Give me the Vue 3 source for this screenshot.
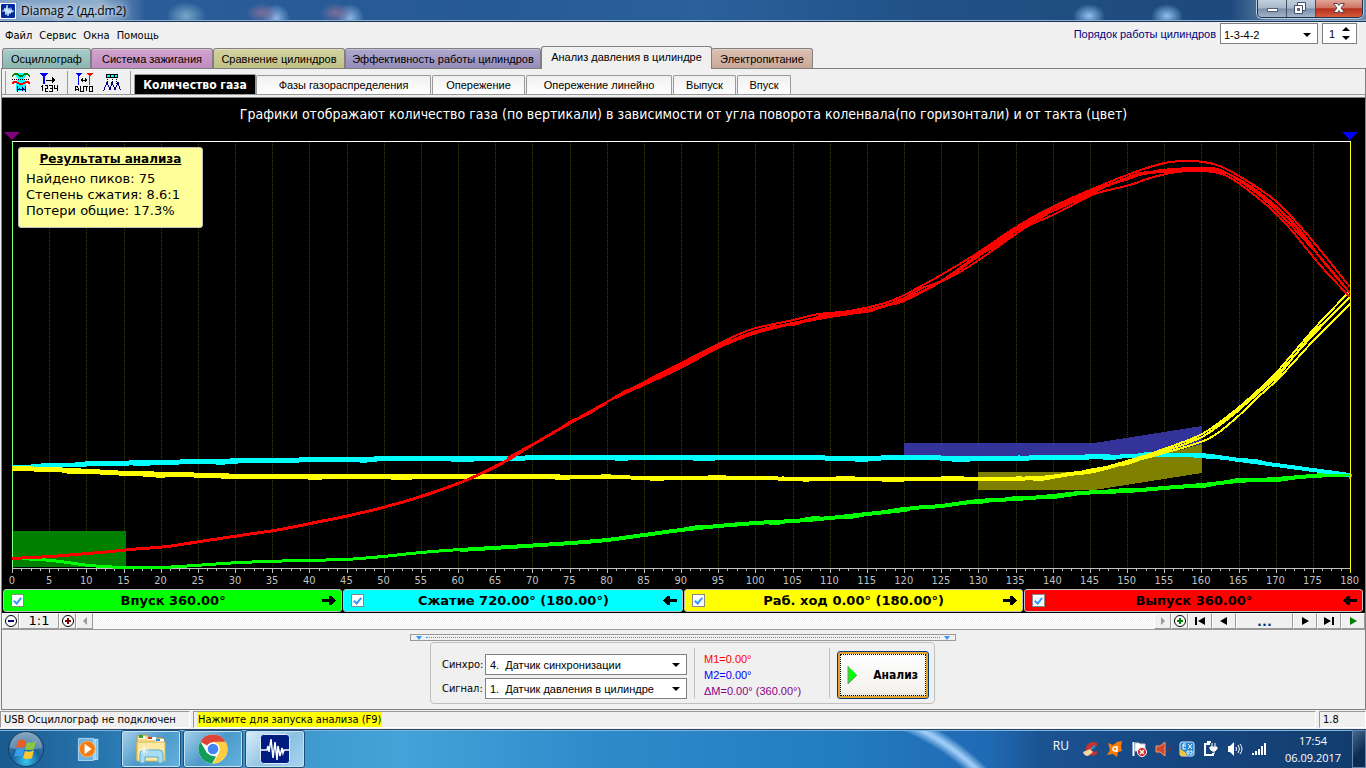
<script setup>
import { ref } from 'vue'

const menu = ['Файл', 'Сервис', 'Окна', 'Помощь']
const tabs = [
  { name: 'Осциллограф', tone: 'teal', w: 89 },
  { name: 'Система зажигания', tone: 'pink', w: 122 },
  { name: 'Сравнение цилиндров', tone: 'olive', w: 132 },
  { name: 'Эффективность работы цилиндров', tone: 'violet', w: 196 },
  { name: 'Анализ давления в цилиндре', tone: 'plain', w: 171 },
  { name: 'Электропитание', tone: 'brown', w: 102 },
]
const views = [
  { name: 'Количество газа', w: 122 },
  { name: 'Фазы газораспределения', w: 175 },
  { name: 'Опережение', w: 93 },
  { name: 'Опережение линейно', w: 146 },
  { name: 'Выпуск', w: 63 },
  { name: 'Впуск', w: 54 },
]
const activeTab = ref(4)
const activeView = ref(0)

const strokes = ref([
  { id: 'intake', label: 'Впуск 360.00°', color: 'lime', dir: 'right', on: true },
  { id: 'compression', label: 'Сжатие 720.00° (180.00°)', color: 'cyan', dir: 'left', on: true },
  { id: 'power', label: 'Раб. ход 0.00° (180.00°)', color: 'yellow', dir: 'right', on: true },
  { id: 'exhaust', label: 'Выпуск 360.00°', color: 'red', dir: 'left', on: true },
])

const degrees = Array.from({ length: 37 }, (_, i) => i * 5)
const minorTicks = Array.from({ length: 145 }, (_, i) => i)
const gridX = (i) => Math.round(12 + (i * 1338) / 36) + 0.5
const minorX = (i) => Math.round(12 + (i * 1338) / 144) + 0.5

const smooth = (pts, dy = 0) => {
  let d = `M${pts[0][0]} ${pts[0][1] + dy}`
  for (let i = 0; i < pts.length - 1; i++) {
    const a = pts[i - 1] || pts[i]
    const b = pts[i]
    const c = pts[i + 1]
    const e = pts[i + 2] || c
    d += `C${b[0] + (c[0] - a[0]) / 6} ${b[1] + dy + (c[1] - a[1]) / 6} ${c[0] - (e[0] - b[0]) / 6} ${c[1] + dy - (e[1] - b[1]) / 6} ${c[0]} ${c[1] + dy}`
  }
  return d
}

// One more recorded cycle that drifts a pixel or two around the mean curve.
const drift = (pts, seed) => {
  const shifts = [0, 2, 1, -1, -2, 0, 1, -1, 2, 0, -2]
  const out = []
  pts.forEach((p, i) => {
    const next = pts[i + 1]
    if (!next) {
      out.push(p)
      return
    }
    const n = Math.max(1, Math.round((next[0] - p[0]) / 22))
    for (let k = 0; k < n; k++) {
      const t = k / n
      const s = shifts[(out.length + seed) % shifts.length]
      out.push([p[0] + (next[0] - p[0]) * t, p[1] + (next[1] - p[1]) * t + s])
    }
  })
  return out
}

const redStart = [[12, 558], [50, 556], [100, 552], [130, 549], [167, 546], [200, 541], [240, 535], [280, 529], [320, 521], [345, 516], [383, 507], [421, 496], [458, 483], [477, 475], [507, 460], [533, 444], [571, 422], [607, 402]]
const red = [
  [...redStart, [644, 382], [681, 363], [718, 344], [737, 335], [756, 328], [793, 320], [819, 314], [850, 311], [885, 303], [904, 295], [941, 275], [979, 252], [1016, 227], [1050, 208], [1090, 190], [1127, 175], [1150, 167], [1170, 162], [1193, 161], [1217, 165], [1239, 176], [1258, 188], [1277, 202], [1300, 226], [1325, 256], [1350, 287]],
  [...redStart, [644, 384], [681, 366], [718, 347], [756, 332], [793, 323], [830, 317], [867, 311], [904, 300], [941, 281], [979, 254], [1016, 229], [1050, 210], [1090, 192], [1128, 179], [1150, 172], [1173, 169], [1217, 169], [1250, 188], [1275, 209], [1300, 235], [1327, 265], [1350, 293]],
  [...redStart, [644, 385], [681, 368], [718, 348], [756, 333], [793, 324], [830, 317], [867, 311], [885, 306], [904, 301], [941, 282], [960, 272], [979, 260], [1016, 234], [1030, 225], [1053, 215], [1080, 201], [1097, 193], [1130, 185], [1150, 178], [1177, 172], [1202, 171], [1227, 176], [1263, 202], [1287, 225], [1320, 265], [1350, 297]],
  [...redStart, [644, 384], [681, 365], [718, 346], [756, 331], [793, 323], [830, 315], [867, 310], [904, 299], [941, 281], [979, 256], [1016, 231], [1053, 211], [1080, 197], [1105, 186], [1140, 175], [1160, 172], [1190, 170], [1220, 171], [1250, 186], [1280, 210], [1300, 232], [1322, 260], [1350, 293]],
]
const cyan = [[12, 467], [50, 466], [75, 465], [100, 464], [160, 463], [200, 462], [260, 461], [340, 460], [410, 459], [460, 459], [600, 458], [700, 458], [790, 458], [860, 459], [904, 458], [980, 459], [1060, 458], [1110, 457], [1150, 455], [1200, 455], [1239, 460], [1276, 465], [1313, 470], [1350, 475]]
const yellowBase = [[12, 469], [50, 470], [90, 472], [130, 474], [180, 475], [250, 477], [440, 477], [560, 477], [700, 478], [867, 479], [979, 479], [1040, 478], [1070, 474], [1094, 471], [1127, 462]]
const yellow = [
  [...yellowBase, [1164, 450], [1202, 435], [1233, 413], [1255, 394], [1277, 373], [1313, 331], [1350, 292]],
  [...yellowBase, [1164, 451], [1202, 437], [1233, 414], [1255, 396], [1277, 375], [1313, 335], [1350, 297]],
  [...yellowBase, [1164, 452], [1208, 438], [1235, 418], [1257, 397], [1280, 376], [1315, 338], [1350, 303]],
]
const green = [[12, 559], [40, 560], [60, 562], [90, 566], [125, 568], [160, 568], [195, 566], [240, 563], [300, 561], [345, 560], [383, 557], [421, 553], [460, 550], [526, 546], [571, 543], [607, 540], [644, 535], [681, 530], [718, 526], [756, 523], [793, 521], [830, 518], [867, 514], [904, 510], [913, 508], [941, 506], [979, 501], [1016, 499], [1053, 496], [1080, 493], [1127, 491], [1164, 488], [1202, 485], [1239, 481], [1276, 479], [1313, 476], [1347, 475], [1350, 477]]
</script>

<template>
  <div class="screen">
    <header class="titlebar">
      <svg class="appicon" viewBox="0 0 16 16"><rect width="16" height="16" fill="#fff" /><rect x="1" y="1" width="14" height="14" rx="1" fill="#002a9c" /><path d="M2 8h2l1-3 1 7 1-10 1 11 1-8 1 6 1-5 1 3 1-1h1" fill="none" stroke="#cfe6ff" stroke-width="1.2" /></svg>
      <span class="wintitle">Diamag 2 (дд.dm2)</span>
      <div class="winbtns">
        <button class="wb" aria-label="Свернуть"><svg width="28" height="17" viewBox="0 0 28 17"><rect x="9.500" y="8.500" width="10" height="3" fill="#fff" stroke="#556078" /></svg></button>
        <button class="wb" aria-label="Развернуть"><svg width="28" height="17" viewBox="0 0 28 17"><path d="M10.500 2.500h8v8h-8z" fill="#fff" stroke="#46506a" /><path d="M7.500 5.500h8v8h-8z" fill="#fff" stroke="#46506a" /><path d="M10.500 8.500h2v2h-2z" fill="#7f9abb" stroke="#46506a" /></svg></button>
        <button class="wb close" aria-label="Закрыть"><svg width="46" height="17" viewBox="0 0 46 17"><path d="M17.500 3.500h4l1.500 2 1.500-2h4l-3.500 4.500 3.500 4.500h-4l-1.500-2-1.500 2h-4l3.500-4.500z" fill="#fff" stroke="#5b4048" /></svg></button>
      </div>
    </header>

    <div class="menurow">
      <nav class="menu"><button v-for="m in menu" :key="m">{{ m }}</button></nav>
      <div class="order">
        <label for="order">Порядок работы цилиндров</label>
        <span class="combo ordercombo"><select id="order"><option>1-3-4-2</option></select><svg class="caret" viewBox="0 0 8 4"><path d="M0 0h8L4 4z" /></svg></span>
        <span class="spin">
          <input value="1" aria-label="Номер цилиндра">
          <span class="arrows">
            <button aria-label="Больше"><svg viewBox="0 0 8 4"><path d="M0 4h8L4 0z" /></svg></button>
            <button aria-label="Меньше"><svg viewBox="0 0 8 4"><path d="M0 0h8L4 4z" /></svg></button>
          </span>
        </span>
      </div>
    </div>

    <nav class="tabs">
      <button v-for="(t, i) in tabs" :key="t.name" class="tab" :class="[t.tone, { active: i === activeTab }]" :style="{ width: t.w + 'px' }" @click="activeTab = i">{{ t.name }}</button>
    </nav>

    <main class="frame">
      <div class="toolbar">
        <button class="tool" aria-label="Область анализа"><svg viewBox="0 0 20 20" shape-rendering="crispEdges"><path d="M5 1h10v3l-2 3 2 4v8H5v-8l2-4-2-3z" fill="cyan" /><path d="M1 4h1M18 4h1M2 3l2-1h2l3 2h2l3-2h2l2 1" fill="none" stroke="green" stroke-width="1.500" /><path d="M1 7h18" stroke="#000" stroke-dasharray="1 1" /><path d="M1 12l2-2h2l4 2h2l4-2h2l2 2" fill="none" stroke="red" stroke-width="1.500" /><path d="M6 17h8M6 14v6M14 14v6" stroke="navy" /><path d="M7 17l2-2v4zM13 17l-2-2v4z" fill="navy" /></svg></button>
        <button class="tool" aria-label="Нумерация цилиндров"><svg viewBox="0 0 20 20" shape-rendering="crispEdges"><path d="M1 1h8L5 6z" fill="blue" /><path d="M5 5v7" stroke="blue" stroke-width="1.500" /><path d="M7 8h7" stroke="#000" /><path d="M13 5l4 3-4 3z" /><path d="M3 13v6M2 14h1M6 13h2v3H6v3h3M10 13h3v6h-3M11 16h2M15 13v3h3M18 13v6" fill="none" stroke="#000" /></svg></button>
        <span class="sep" />
        <button class="tool" aria-label="Автоматическая установка маркеров"><svg viewBox="0 0 20 20" shape-rendering="crispEdges"><path d="M1 1h7L5 5z" fill="blue" /><path d="M4.500 3v10" stroke="blue" stroke-width="1.500" /><path d="M12 1h7l-3 4z" fill="red" /><path d="M15.500 3v10" stroke="red" stroke-width="1.500" /><path d="M7 8h6" stroke="#000" /><path d="M6 8l3-2v4zM14 8l-3-2v4z" /><path d="M1 19v-3l1-2h1l1 2v3M1 17h3M6 14v5h3v-5M10 14h4M12 14v5M15 14h3v5h-3z" fill="none" stroke="#000" /></svg></button>
        <button class="tool" aria-label="Поиск пиков"><svg viewBox="0 0 20 20" shape-rendering="crispEdges"><path d="M4.500 2.500h11v3h-11z" fill="cyan" stroke="#000" /><path d="M8 2v4M12 2v4" stroke="#000" /><path d="M5 7v6M10 7v6M14 7v6" stroke="#000" stroke-dasharray="1 1" /><path d="M1 18h1l3-8 3 8 2-8 3 8 3-8 2 7 1 1" fill="none" stroke="navy" /></svg></button>
        <span class="sep" />
        <nav class="views">
          <button v-for="(v, i) in views" :key="v.name" :class="{ active: i === activeView }" :style="{ width: v.w + 'px' }" @click="activeView = i">{{ v.name }}</button>
        </nav>
      </div>

      <section class="chart">
        <h1>Графики отображают количество газа (по вертикали) в зависимости от угла поворота коленвала(по горизонтали) и от такта (цвет)</h1>
        <div class="markers">
          <svg width="16" height="8" viewBox="0 0 16 8"><path d="M0 0h16L8 8z" fill="purple" /></svg>
          <svg width="16" height="8" viewBox="0 0 16 8"><path d="M0 0h16L8 8z" fill="blue" /></svg>
        </div>
        <div class="plot">
          <svg class="curves" viewBox="12 141 1339 432" preserveAspectRatio="none" shape-rendering="crispEdges">
            <g stroke="#404000" stroke-dasharray="1 1"><line v-for="(d, i) in degrees" :key="d" :x1="gridX(i)" :x2="gridX(i)" y1="142" y2="568" /></g>
            <rect x="13" y="531" width="113" height="36" fill="green" />
            <path d="M904 443H1094L1202 426V444L1140 458H904z" fill="#333399" />
            <path d="M978 472H1094L1202 444V473L1094 490H978z" fill="#808000" />
            <path d="M12.500 142v426" stroke="#80ff80" />
            <path d="M12 141.500h1339" stroke="#fff" />
            <path d="M12 568.500h1339" stroke="#c0c0c0" />
            <g stroke="#c0c0c0"><line v-for="i in minorTicks" :key="i" :x1="minorX(i)" :x2="minorX(i)" y1="569" :y2="i % 4 ? 571 : 573" /></g>
            <g fill="none" stroke-width="2" stroke-linejoin="round">
              <g v-if="strokes[0].on" stroke="lime"><path :d="smooth(green)" /><path :d="smooth(green, -1)" /><path :d="smooth(green.slice(12), 1)" /><path :d="smooth(drift(green.slice(17), 3))" /></g>
              <g v-if="strokes[1].on" stroke="cyan"><path v-for="o in [-1, 0, 1]" :key="o" :d="smooth(cyan, o)" /><path :d="smooth(cyan.slice(2, 18), -2)" /><path :d="smooth(drift(cyan, 2))" /></g>
              <g v-if="strokes[0].on" stroke="lime"><path :d="smooth(green.slice(34))" /></g>
              <g v-if="strokes[2].on" stroke="yellow"><path v-for="(p, i) in yellow" :key="i" :d="smooth(p, i - 1)" /><path :d="smooth(yellowBase.slice(0, 8), -2)" /><path :d="smooth(drift(yellow[1], 5))" /></g>
              <g v-if="strokes[3].on" stroke="red"><path v-for="(p, i) in red" :key="i" :d="smooth(p)" /><path :d="smooth(redStart, 1)" /><path :d="smooth(drift(red[3].slice(14), 4))" /></g>
            </g>
            <path d="M1350.500 142v431" stroke="yellow" />
          </svg>
          <aside class="results">
            <h2>Результаты анализа</h2>
            <p>Найдено пиков: 75</p>
            <p>Степень сжатия: 8.6:1</p>
            <p>Потери общие: 17.3%</p>
          </aside>
        </div>
        <div class="axis"><span v-for="d in degrees" :key="d">{{ d }}</span></div>
        <div class="legend">
          <label v-for="s in strokes" :key="s.id" class="stroke" :class="s.color">
            <input v-model="s.on" type="checkbox">
            <span>{{ s.label }}</span>
            <svg width="14" height="9" viewBox="0 0 14 9" shape-rendering="crispEdges"><path v-if="s.dir === 'right'" d="M0 3h7V0h2l5 4.500L9 9H7V6H0z" /><path v-else d="M14 3H7V0H5L0 4.500 5 9h2V6h7z" /></svg>
          </label>
        </div>
      </section>

      <div class="scroller">
        <button class="zoombtn" aria-label="Уменьшить"><svg viewBox="0 0 14 14"><circle cx="7" cy="7" r="5.500" fill="#fff" stroke="#000" /><path d="M4 7h6" stroke="navy" stroke-width="2" /></svg></button>
        <button class="ratio">1:1</button>
        <button class="zoombtn" aria-label="Увеличить"><svg viewBox="0 0 14 14"><circle cx="7" cy="7" r="5.500" fill="#fff" stroke="#000" /><path d="M4 7h6M7 4v6" stroke="maroon" stroke-width="2" /></svg></button>
        <button class="zoombtn" aria-label="Влево"><svg viewBox="0 0 14 14"><path d="M9 3v8L5 7z" fill="#999" /></svg></button>
        <div class="track" />
        <button class="zoombtn" aria-label="Вправо"><svg viewBox="0 0 14 14"><path d="M5 3v8l4-4z" fill="#999" /></svg></button>
        <button class="zoombtn" aria-label="Добавить"><svg viewBox="0 0 14 14"><circle cx="7" cy="7" r="5.500" fill="#fff" stroke="#000" /><path d="M4 7h6M7 4v6" stroke="green" stroke-width="2" /></svg></button>
        <button class="step" aria-label="В начало"><svg viewBox="0 0 14 14"><path d="M3 3v8" stroke="#000" stroke-width="2" /><path d="M12 3v8L5 7z" /></svg></button>
        <button class="step" aria-label="Назад"><svg viewBox="0 0 14 14"><path d="M10 3v8L3 7z" /></svg></button>
        <button class="dots">...</button>
        <button class="step" aria-label="Вперёд"><svg viewBox="0 0 14 14"><path d="M4 3v8l7-4z" /></svg></button>
        <button class="step" aria-label="В конец"><svg viewBox="0 0 14 14"><path d="M2 3v8l7-4z" /><path d="M11 3v8" stroke="#000" stroke-width="2" /></svg></button>
        <button class="step" aria-label="Пуск"><svg viewBox="0 0 14 14"><path d="M4 3v8l7-4z" fill="green" /></svg></button>
      </div>

      <section class="controls">
        <div class="splitter"><svg viewBox="0 0 6 4"><path d="M0 0h6L3 4z" /></svg><i /><svg viewBox="0 0 6 4"><path d="M0 0h6L3 4z" /></svg></div>
        <div class="group">
          <div class="fields">
            <label for="sync">Синхро:</label>
            <span class="combo"><select id="sync"><option>4.&nbsp; Датчик синхронизации</option></select><svg class="caret" viewBox="0 0 8 4"><path d="M0 0h8L4 4z" /></svg></span>
            <label for="signal">Сигнал:</label>
            <span class="combo"><select id="signal"><option>1.&nbsp; Датчик давления в цилиндре</option></select><svg class="caret" viewBox="0 0 8 4"><path d="M0 0h8L4 4z" /></svg></span>
          </div>
          <div class="marks"><p class="m1">M1=0.00°</p><p class="m2">M2=0.00°</p><p class="md">ΔM=0.00° (360.00°)</p></div>
          <button class="analyze"><svg width="11" height="20" viewBox="0 0 11 20"><path d="M1 1l9 9-9 9z" fill="lime" /><path d="M1 1v18l9-9" fill="none" stroke="#888" /></svg><span>Анализ</span></button>
        </div>
      </section>
    </main>

    <footer class="status">
      <span class="usb">USB Осциллограф не подключен</span>
      <span class="hint"><mark>Нажмите для запуска анализа (F9)</mark></span>
      <span class="version">1.8</span>
    </footer>

    <div class="taskbar">
      <button class="start" aria-label="Пуск"><svg viewBox="0 0 38 38"><defs><radialGradient id="orb" cx=".5" cy=".85" r=".8"><stop offset="0" stop-color="#38c8f0" /><stop offset=".5" stop-color="#17619c" /><stop offset="1" stop-color="#5d84a4" /></radialGradient></defs><circle cx="19" cy="19" r="17.500" fill="url(#orb)" stroke="#123c61" /><path d="M3 18a16 16 0 0 1 32 0q-16 4-32 0z" fill="#fff" opacity=".25" /><path d="M11 11q4-3 8 0l-2 7q-4-2-8 0z" fill="#ef5b25" /><path d="M20 12q5 2 9-1l-2 8q-4 2-9 0z" fill="#8cc540" /><path d="M9 20q4-3 8 0l-2 7q-4-2-8 0z" fill="#38a0e8" /><path d="M18 21q5 2 9-1l-2 8q-4 2-9 0z" fill="#fdc72f" /></svg></button>
      <button class="task bare" aria-label="Проигрыватель"><svg viewBox="0 0 34 34"><path d="M20 6h7v23h-7z" fill="#7fc0ea" stroke="#c3e5fa" /><path d="M24 6v23" stroke="#d7effc" /><path d="M5 5h17v25H5z" fill="#6db4e3" stroke="#b6dcf4" /><circle cx="15" cy="17" r="9" fill="#f47b12" stroke="#ffb35e" /><path d="M12 11l8 6-8 6z" fill="#fff" /></svg></button>
      <button class="task" aria-label="Проводник"><svg viewBox="0 0 34 34"><path d="M3 9V5l2-2h8l2 3h14l1 3v18H2z" fill="#f4dc82" stroke="#b99b45" /><path d="M5 4h6v3H5z" fill="#fff" /><path d="M5 3h4v3H5z" fill="#39a13c" /><path d="M14 5h8v3h-8z" fill="#fff" /><path d="M14 5h4v2h-4z" fill="#d43c21" /><path d="M22 7h8v3h-8z" fill="#fff" /><path d="M22 7h4v2h-4z" fill="#2790dd" /><path d="M3 10h28v19H3z" fill="#fbe9a2" stroke="#d3b75e" /><path d="M6 31v-9q0-4 4-4h15q4 0 4 4v9h-5v-6H11v6z" fill="#a7dcf2" stroke="#5aa9cf" /><path d="M10 13v10M5 18h10M7 15l6 6M13 15l-6 6" stroke="#fff" opacity=".85" /></svg></button>
      <button class="task" aria-label="Браузер"><svg viewBox="0 0 34 34"><circle cx="17" cy="17" r="14.500" fill="#fff" /><path d="M17 17L4.400 9.800A14.500 14.500 0 0 1 29.600 9.800z" fill="#db4437" /><path d="M17 17V9.800h12.600A14.500 14.500 0 0 1 17 31.500l6-11z" fill="#ffcd40" /><path d="M4.400 9.800L11 21l6 3 3 .5-3.800 7A14.500 14.500 0 0 1 4.400 9.800z" fill="#0f9d58" /><circle cx="17" cy="17" r="6.800" fill="#fff" /><circle cx="17" cy="17" r="5.300" fill="#4285f4" /></svg></button>
      <button class="task current" aria-label="Diamag 2"><svg viewBox="0 0 34 34"><rect x="2.500" y="2.500" width="29" height="29" rx="3" fill="#001c80" stroke="#dfeaff" /><path d="M3 18h6l1-4 1 6 2-13 2 19 2-16 2 18 1-14 2 10 2-8 1 5 1-3h5" fill="none" stroke="#fff" stroke-width="1.500" /></svg></button>
      <div class="tray">
        <span class="lang">RU</span>
        <svg viewBox="0 0 16 16"><path d="M14 5V2Q8-1 4 4q-3 5 1 9 4 3 9 0v-3q-4 2-6-1-1-5 6-4z" fill="#c8322d" /><path d="M0 11l7-3 3 3-5 4q-4 0-5-4z" fill="#f3d5a2" /><path d="M8 8l4-3" stroke="#4a91c9" stroke-width="2" /></svg>
        <svg viewBox="0 0 16 16"><path d="M1 2l5 2 4-3 5-1-1 6 1 4-4 1-1 5-4-3-6 1 3-5z" fill="#ff7800" /><path d="M10 5v6M10 8a2 2 0 1 0-4 0 2 2 0 0 0 4 0" fill="none" stroke="#fff" stroke-width="1.500" /></svg>
        <svg viewBox="0 0 16 16"><path d="M2.500 1v14" stroke="#fff" stroke-width="2" /><path d="M4 2h4l1 1h5v7H4z" fill="#fff" stroke="#ccc" /><circle cx="11" cy="11" r="4.500" fill="#d62020" stroke="#fff" /><path d="M9 9l4 4M13 9l-4 4" stroke="#fff" stroke-width="1.500" /></svg>
        <svg viewBox="0 0 16 16"><path d="M1 5h4l5-4v14l-5-4H1z" fill="#ce492c" stroke="#ef9c76" /><path d="M12 5q2 3 0 6M14 3q3 5 0 10" fill="none" stroke="#7b2f32" /></svg>
        <svg viewBox="0 0 16 16"><rect x="1" y="1" width="14" height="14" rx="2" fill="#2385d1" stroke="#d5ecfb" /><path d="M4 3v5h3M4 5h3M4 3h3M9 3l4 5M13 3L9 8M8 10h2v3H8zM11 10h2v3h-2" fill="none" stroke="#fff" /><path d="M1 8l5 3 2 4H3q-2 0-2-2z" fill="#f1c63c" /></svg>
        <svg viewBox="0 0 16 16"><path d="M7 3H2v11h8v-2M4 1h4" fill="none" stroke="#fff" stroke-width="2" /><path d="M7 6h7v2l-2 2H9L7 8zM9 2v4M12 2v4M11 10v3" fill="#fff" stroke="#fff" /></svg>
        <svg viewBox="0 0 16 16"><path d="M1 5h2l4-4v14l-4-4H1z" fill="#fff" /><path d="M9 6q1 2 0 4M11 4q3 4 0 8M13 3q4 5 0 10" fill="none" stroke="#fff" /></svg>
        <svg viewBox="0 0 16 16"><path d="M1 14v-2h2v2zM4 14v-4h2v4zM7 14V8h2v6zM10 14V5h2v9zM13 14V2h2v12z" fill="#fff" /></svg>
        <div class="clock"><span>17:54</span><span>06.09.2017</span></div>
        <button class="peek" aria-label="Рабочий стол" />
      </div>
    </div>
  </div>
</template>

<style>
html, body { margin: 0; background: #f0f0f0; }
#app { display: block; }
</style>

<style scoped>
* { box-sizing: border-box; }
.screen { min-height: 100vh; display: flex; flex-direction: column; background: #f0f0f0; color: #000; font: 11px/14px "Liberation Sans", Arial, sans-serif; }
button, input, select { font: inherit; color: inherit; margin: 0; padding: 0; border: 0; background: none; border-radius: 0; }
h1, h2, p { margin: 0; font-weight: normal; }
svg { display: block; flex: none; }

.titlebar { height: 22px; display: flex; align-items: flex-start; gap: 5px; border-bottom: 1px solid #1b3354; box-shadow: inset 0 -1px #8fb0d2; background: radial-gradient(ellipse 20px 14px at 186px 16px, #78a9c9, transparent), radial-gradient(ellipse 16px 10px at 262px 13px, #7a6f9c, transparent), radial-gradient(ellipse 14px 14px at 276px 18px, #8db6e6, transparent), radial-gradient(ellipse 16px 10px at 336px 13px, #7a6f9c, transparent), radial-gradient(ellipse 14px 14px at 350px 18px, #8db6e6, transparent), radial-gradient(ellipse 16px 12px at 1089px 16px, #8fc0ee, transparent), radial-gradient(ellipse 16px 12px at 1167px 16px, #8fc0ee, transparent), linear-gradient(90deg, #7fa0c4 0, #8fadcd 100px, #2a5c98 145px, #265a95 500px, #2a619b 700px, #215187 920px, #1d4a7d 1230px, #6b88a8 1280px); }
.appicon { width: 16px; height: 16px; margin-top: 3px; }
.wintitle { flex: 1; font: 12px/21px "Open Sans", "Noto Sans", sans-serif; text-shadow: 0 0 6px #fff, 0 0 6px #dbe8f5; }
.winbtns { display: flex; height: 18px; margin-right: 3px; border: 1px solid #22334e; border-top: 0; border-radius: 0 0 5px 5px; overflow: hidden; box-shadow: 0 0 0 1px #b9cbe0; }
.wb { display: flex; background: linear-gradient(#c3cfdd 0, #a7b6c8 48%, #7a8ea8 52%, #a3b4c8); border-right: 1px solid #3f526c; }
.close { border: 0; background: linear-gradient(#e0a598 0, #cf7362 45%, #b5301b 52%, #d65b3d); }

.menurow { display: flex; justify-content: space-between; height: 24px; font-family: "DejaVu Sans Condensed", "DejaVu Sans", sans-serif; }
.menu { display: flex; gap: 7px; padding: 3px 0 0 5px; }
.order { display: flex; align-items: flex-start; padding: 1px 9px 0 0; gap: 4px; color: navy; font: 11px/22px "Liberation Sans", sans-serif; }
.combo { display: grid; align-items: center; height: 21px; background: #fff; border: 1px solid #808080; color: #000; }
.combo select { grid-area: 1 / 1; appearance: none; width: 100%; padding: 0 4px; }
.ordercombo { width: 98px; }
.ordercombo select { padding: 0 3px; }
.caret { grid-area: 1 / 1; justify-self: end; width: 8px; height: 4px; margin-right: 6px; pointer-events: none; }
.spin { display: flex; width: 35px; height: 21px; background: #fff; border: 1px solid #808080; color: #000; }
.spin input { width: 18px; padding-left: 6px; }
.arrows { display: flex; flex-direction: column; justify-content: center; gap: 5px; padding-left: 1px; }
.arrows button { display: block; }
.arrows svg { width: 8px; height: 4px; }

.tabs { display: flex; align-items: flex-end; height: 22px; padding-left: 2px; }
.tab { height: 20px; border: 1px solid #808080; border-bottom: 0; border-radius: 3px 3px 0 0; font-size: 11px; white-space: nowrap; box-shadow: inset 0 1px #ffffff40; }
.tab.active { height: 23px; margin: 0 -1px -1px 0; background: #f0f0f0; padding-bottom: 2px; z-index: 1; }
.teal { background: linear-gradient(#a9cdca, #8ab5b1); }
.pink { background: linear-gradient(#d3a5cf, #c08bbd); }
.olive { background: linear-gradient(#d3d3a0, #c1c184); }
.violet { background: linear-gradient(#b0a9ce, #948cb8); }
.brown { background: linear-gradient(#dcc0b2, #c9a898); }

.frame { flex: 1; display: flex; flex-direction: column; margin-left: 1px; border: 1px solid #808080; }
.toolbar { display: flex; height: 29px; align-items: flex-start; border-bottom: 1px solid #808080; box-shadow: inset 0 -2px #f0f0f0, inset 0 -3px #999; padding-left: 3px; }
.toolbar::before { content: ""; width: 1px; height: 23px; margin: 2px 5px 0 0; background: #999; }
.tool { width: 28px; height: 24px; display: flex; padding-top: 3px; }
.tool svg { width: 20px; height: 20px; }
.sep { width: 1px; height: 23px; margin: 2px 6px 0 0; background: #999; }
.views { display: flex; align-items: flex-end; height: 25px; gap: 1px; margin-left: -3px; }
.views button { height: 19px; white-space: nowrap; border: 1px solid #999; border-bottom: 0; border-radius: 2px 2px 0 0; background: linear-gradient(#f0f0f0, #fff); font-size: 11px; }
.views .active { height: 20px; background: #000; color: #fff; font: bold 12px/18px "DejaVu Sans Condensed", "DejaVu Sans", sans-serif; margin-right: -1px; }

.chart { background: #000; color: #fff; flex: 1; display: flex; flex-direction: column; }
h1 { font: 14px/16px "DejaVu Sans Condensed", "DejaVu Sans", sans-serif; text-align: center; padding: 8px 0 10px; }
.markers { display: flex; justify-content: space-between; margin: 0 7px 0 2px; height: 9px; }
.plot { display: grid; flex: 1; margin: 0 14px 0 10px; min-height: 300px; }
.curves { grid-area: 1 / 1; width: 100%; height: 432px; overflow: visible; }
.results { grid-area: 1 / 1; justify-self: start; align-self: start; width: 185px; height: 81px; margin: 6px 0 0 6px; padding: 3px 7px; border: 1px solid #c0c0c0; border-radius: 3px; background: #ffff99; color: #000; font: 13px/16px "DejaVu Sans", sans-serif; position: relative; }
.results h2 { font: bold 12px/16px "DejaVu Sans", sans-serif; text-decoration: underline; text-align: center; padding-bottom: 4px; }
.axis { display: flex; justify-content: space-between; margin: 1px 15px 0 10px; height: 14px; color: #c0c0c0; font: 11px/14px "DejaVu Sans Condensed", sans-serif; }
.axis span { width: 0; display: flex; justify-content: center; }
.legend { display: grid; grid-template-columns: repeat(4, 1fr); gap: 1px; padding: 1px 2px 1px 1px; }
.stroke { display: flex; align-items: center; height: 23px; padding: 0 5px 0 7px; border: 1px solid #c0c0c0; border-radius: 3px; color: #000; font: bold 13px/20px "DejaVu Sans", sans-serif; }
.stroke span { flex: 1; text-align: center; }
.stroke input { appearance: none; width: 13px; height: 13px; border: 1px solid #888; background: #fff; display: grid; place-items: center; }
.stroke input:checked::after { content: ""; width: 3px; height: 6px; border: solid #3399ff; border-width: 0 2px 2px 0; transform: rotate(40deg); margin-top: -2px; }
.lime { background: #0f0; }
.cyan { background: #0ff; }
.yellow { background: #ff0; }
.red { background: #f00; }

.scroller { display: flex; height: 17px; border-bottom: 1px solid #999; background: #f0f0f0; }
.scroller button { display: flex; align-items: center; justify-content: center; border: 1px solid; border-color: #fff #999 #999 #fff; background: #f0f0f0; }
.scroller svg { width: 14px; height: 14px; }
.zoombtn { width: 17px; }
.ratio { width: 40px; font: 13px/16px "DejaVu Sans", sans-serif; }
.track { flex: 1; background: repeating-conic-gradient(#fff 0 25%, #f0f0f0 0 50%) 0 0 / 2px 2px; }
.step { width: 24px; }
.scroller .dots { width: 57px; color: #003c8c; font: bold 13px/16px "DejaVu Sans", sans-serif; padding-top: 2px; }

.controls { display: flex; flex-direction: column; align-items: center; height: 79px; padding: 4px 2px 0 0; }
.splitter { width: 546px; height: 7px; border: 1px solid #999; display: flex; align-items: center; padding: 0 5px; gap: 4px; fill: #3399ff; }
.splitter svg { width: 6px; height: 4px; }
.splitter i { flex: 1; border-top: 1px dotted #3399ff; }
.group { display: flex; align-items: flex-start; width: 505px; height: 62px; margin-top: 1px; border: 1px solid #c0c0c0; border-radius: 4px; padding: 5px 5px 0 11px; }
.fields { display: grid; grid-template-columns: 40px 202px; gap: 3px; align-items: center; margin-top: 6px; }
.fields label { font: 11px/20px "DejaVu Sans Condensed", sans-serif; }
.marks { margin-left: 7px; padding: 3px 0 0 9px; width: 137px; height: 50px; border: solid #c0c0c0; border-width: 0 1px; font: 11px/16px "Liberation Sans", sans-serif; }
.m1 { color: #f00; }
.m2 { color: #00f; }
.md { color: #808; }
.analyze { display: flex; align-items: center; width: 92px; height: 48px; margin: 3px 0 0 7px; padding: 0 10px 0 9px; border: 1px solid #003c74; border-radius: 3px; background: linear-gradient(#fff, #f4f3ee 80%, #e3e2d8); box-shadow: inset 0 0 0 2px #e8a22e; outline: 1px dotted #000; outline-offset: -4px; font: bold 12px/16px "DejaVu Sans Condensed", "DejaVu Sans", sans-serif; }
.analyze span { flex: 1; text-align: right; }

.status { display: flex; gap: 3px; height: 19px; padding: 1px 0; font: 11px/15px "DejaVu Sans Condensed", sans-serif; }
.status > span { border: 1px solid; border-color: #999 #fff #fff #999; padding-left: 3px; white-space: nowrap; }
.usb { width: 190px; }
.hint { flex: 1; }
.hint mark { background: #ff0; padding: 1px; }
.version { width: 47px; }

.taskbar { display: flex; height: 39px; border-top: 1px solid #27476b; box-shadow: inset 0 1px #7fb4da; background: radial-gradient(circle at -60px 201px, transparent 216px, #9bcaf5 224px, #9bcaf5 226px, transparent 234px) 880px 0 / 120px 39px no-repeat, linear-gradient(90deg, #195a8f 0, #2c7bb4 120px, #3d93c8 240px, #44a3d8 400px, #2f8acb 600px, #237bc0 850px, #2069b4 990px, #1b5391 1040px, #164680 1180px, #123c6d 1366px); }
.start { width: 40px; margin: 0 12px 0 7px; }
.start svg { width: 38px; height: 38px; }
.task { width: 60px; height: 38px; margin-right: 2px; display: flex; align-items: center; justify-content: center; border: 1px solid #1f4e78; border-radius: 3px; background: linear-gradient(135deg, #a9d1eb, #4c9aca 50%, #64b1dd); box-shadow: inset 0 0 0 1px #c5e2f3; }
.task.bare { background: none; border: 0; box-shadow: none; }
.task.current { background: linear-gradient(135deg, #dceefa, #8cc1e2 55%, #a9d5ee); }
.task svg { width: 34px; height: 34px; }
.task.bare svg { width: 30px; height: 30px; }
.tray { display: flex; align-items: center; gap: 8px; margin-left: auto; color: #fff; font: 12px/16px "Open Sans", "Noto Sans", sans-serif; }
.tray svg { width: 16px; height: 16px; }
.lang { margin: -6px 6px 0 0; }
.clock { display: flex; flex-direction: column; align-items: center; margin: 0 2px 0 9px; width: 58px; font-size: 11px; line-height: 17px; white-space: nowrap; }
.peek { width: 14px; height: 38px; border: 1px solid #6487ab; background: linear-gradient(135deg, #45698f, #0e2c50 60%); }
</style>
